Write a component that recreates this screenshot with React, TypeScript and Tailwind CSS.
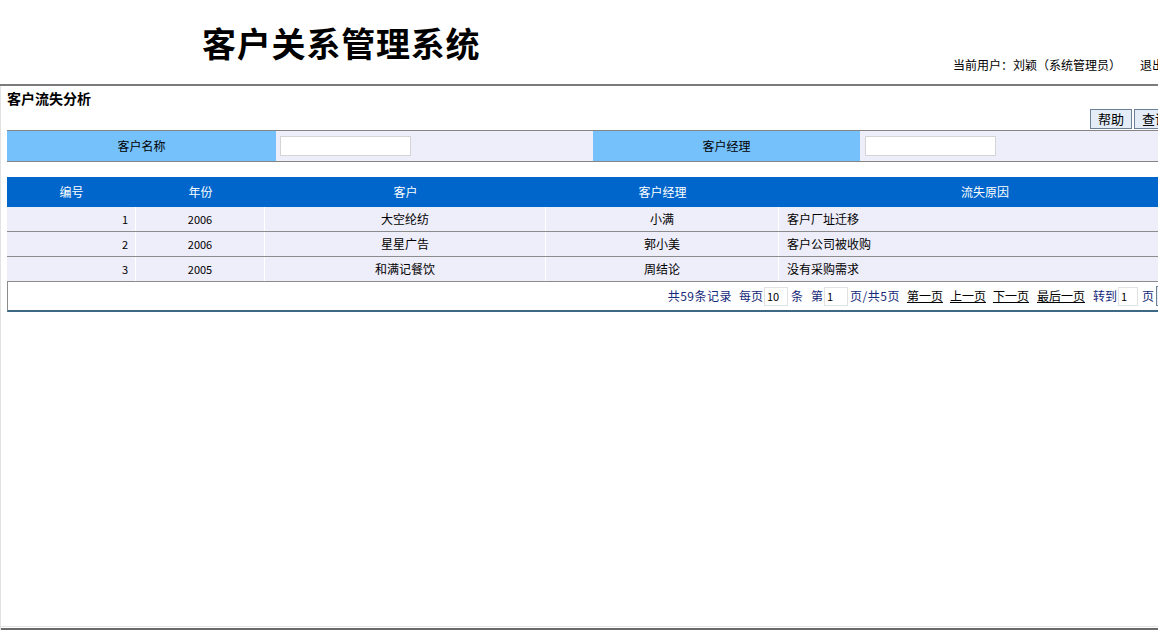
const font = "font-['SimSun','Noto_Sans_CJK_SC',sans-serif]";

const rows = [
  { id: 1, year: "2006", customer: "大空纶纺", manager: "小满", reason: "客户厂址迁移" },
  { id: 2, year: "2006", customer: "星星广告", manager: "郭小美", reason: "客户公司被收购" },
  { id: 3, year: "2005", customer: "和满记餐饮", manager: "周结论", reason: "没有采购需求" },
];

function PagerInput({ value, w }: { value: string; w: string }) {
  return (
    <span
      className={`inline-block ${w} h-[19px] mx-[1px] bg-white border border-[#e2e2e2] text-black text-[11px] leading-[17px] pl-[2px] align-middle`}
    >
      {value}
    </span>
  );
}

function App() {
  return (
    <div className={`w-[1158px] h-[630px] overflow-hidden bg-white flex flex-col text-black ${font}`}>
      {/* top frame */}
      <div className="h-[84px] flex flex-col">
        <div className="h-[57px] pl-[202px] pt-[23px]">
          <h1 className="text-[34px] font-bold leading-[40px] whitespace-nowrap tracking-[0.8px] font-['Noto_Sans_CJK_SC',sans-serif]">
            客户关系管理系统
          </h1>
        </div>
        <div className="h-[16px] pl-[953px] flex text-[12px] leading-[16px] whitespace-nowrap">
          <span>当前用户：刘颖（系统管理员）</span>
          <span className="ml-[19px]">退出</span>
        </div>
      </div>
      <div className="h-[2px] bg-[#7b7b7b]" />

      {/* content frame */}
      <div className="flex-1 flex flex-col border-l border-[#e2e2e2]">
        <div className="flex-1 pl-[6px] border-b border-[#e6e6e6]">
          <div className="w-[1184px]">
            <h2 className="pt-[3px] text-[14px] font-bold leading-[18px] whitespace-nowrap">客户流失分析</h2>
            <div className="mt-[2px] flex justify-end gap-[2px] pr-[15px]">
              <button className="h-[20px] px-[7px] text-[13px] leading-[18px] border border-[#6d7f94] bg-[#e3ecf7] whitespace-nowrap">
                帮助
              </button>
              <button className="h-[20px] px-[7px] text-[13px] leading-[18px] border border-[#6d7f94] bg-[#e3ecf7] whitespace-nowrap">
                查询
              </button>
            </div>

            {/* query form */}
            <div className="mt-[1px] h-[32px] grid grid-cols-[269px_317px_267px_331px] border-y border-[#858585] text-[12px]">
              <div className="bg-[#74c1fb] flex items-center justify-center">客户名称</div>
              <div className="bg-[#eeedfa] flex items-center pl-[4px]">
                <span className="w-[131px] h-[20px] bg-white border border-[#d4d4d4]" />
              </div>
              <div className="bg-[#74c1fb] flex items-center justify-center">客户经理</div>
              <div className="bg-[#eeedfa] flex items-center pl-[5px]">
                <span className="w-[131px] h-[20px] bg-white border border-[#d4d4d4]" />
              </div>
            </div>

            {/* result grid */}
            <div className="mt-[15px] text-[12px]">
              <div className="h-[30px] grid grid-cols-[129px_129px_281px_233px_412px] bg-[#0066cc] text-white">
                <div className="flex items-center justify-center">编号</div>
                <div className="flex items-center justify-center">年份</div>
                <div className="flex items-center justify-center">客户</div>
                <div className="flex items-center justify-center">客户经理</div>
                <div className="flex items-center justify-center">流失原因</div>
              </div>
              {rows.map((r) => (
                <div
                  key={r.id}
                  className="h-[25px] grid grid-cols-[129px_129px_281px_233px_412px] bg-[#eeedfa] border-b border-[#8c8c8c]"
                >
                  <div className="flex items-center justify-end pr-[7px] border-r border-white text-[11px]">{r.id}</div>
                  <div className="flex items-center justify-center border-r border-white text-[11px]">{r.year}</div>
                  <div className="flex items-center justify-center border-r border-white">{r.customer}</div>
                  <div className="flex items-center justify-center border-r border-white">{r.manager}</div>
                  <div className="flex items-center pl-[8px]">{r.reason}</div>
                </div>
              ))}
              <div className="h-[30px] flex items-center justify-end pr-[13px] border-l border-[#8c8c8c] border-b-2 border-b-[#3d6986] text-[#14287a] whitespace-nowrap">
                <span className="tracking-[0.5px]">共59条记录</span>
                <span className="ml-[7px]">每页</span>
                <PagerInput value="10" w="w-[24px]" />
                <span className="ml-[2px]">条</span>
                <span className="ml-[8px]">第</span>
                <PagerInput value="1" w="w-[24px]" />
                <span className="ml-[1px] tracking-[0.5px]">页/共5页</span>
                <span className="ml-[7px] underline text-black">第一页</span>
                <span className="ml-[7px] underline text-black">上一页</span>
                <span className="ml-[7px] underline text-black">下一页</span>
                <span className="ml-[8px] underline text-black">最后一页</span>
                <span className="ml-[8px]">转到</span>
                <PagerInput value="1" w="w-[20px]" />
                <span className="ml-[3px]">页</span>
                <span className="ml-[2px] inline-block w-[22px] h-[20px] border border-[#6d7f94] bg-[#e3ecf7]" />
              </div>
            </div>
          </div>
        </div>
        <div className="h-[1px] bg-white" />
        <div className="h-[2px] bg-[#6a6a6a]" />
      </div>
    </div>
  );
}

export default App;
